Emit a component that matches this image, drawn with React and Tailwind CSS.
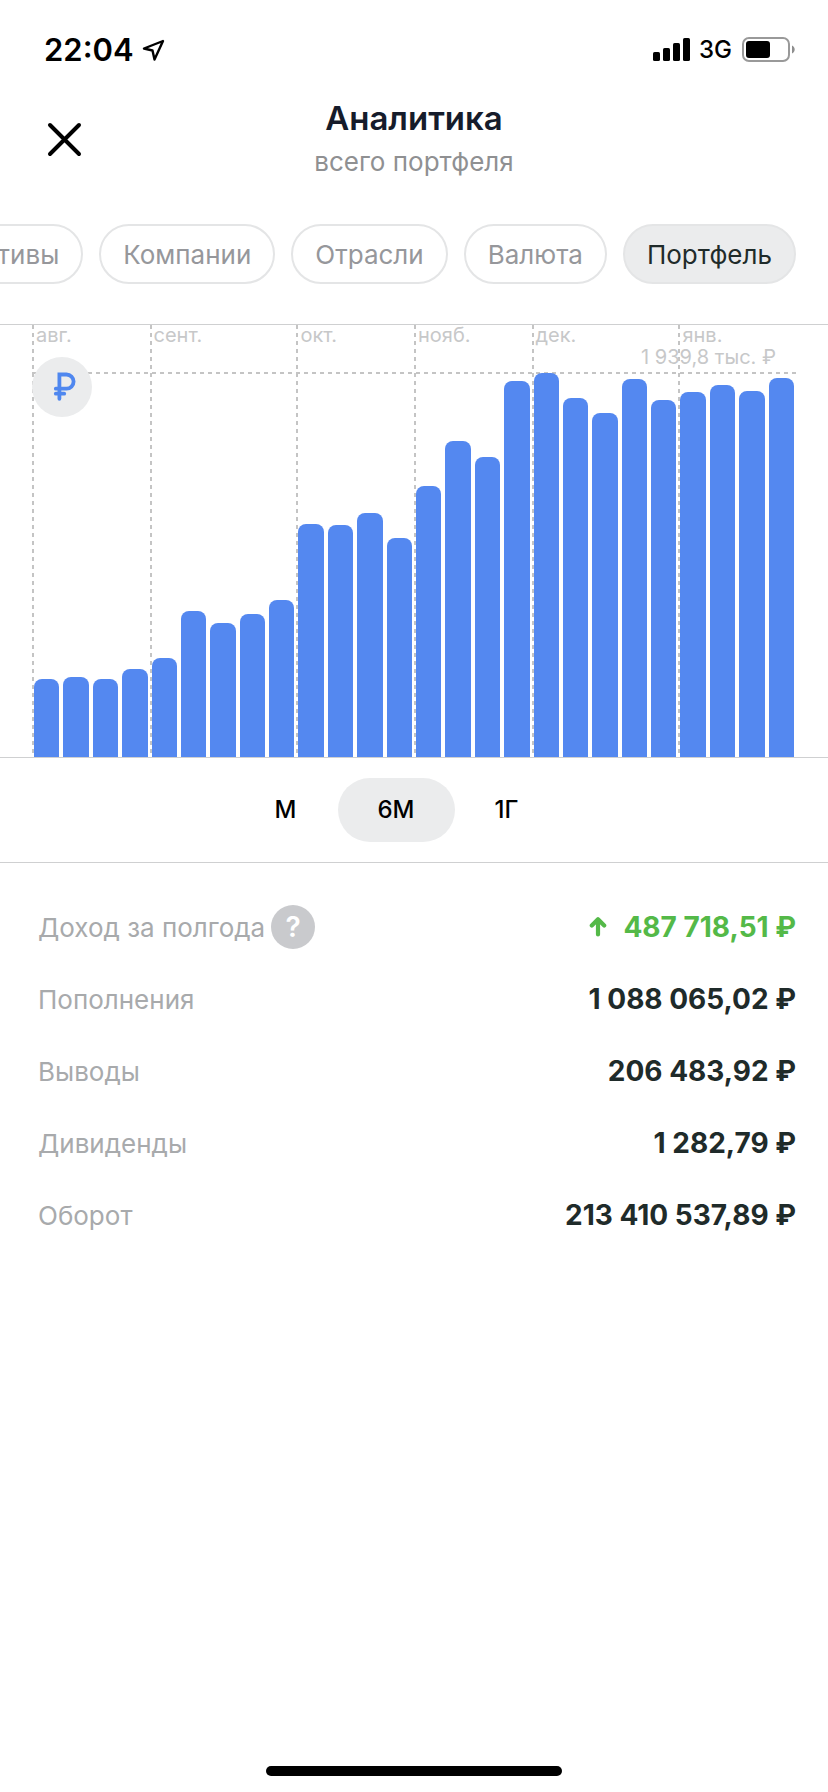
import { useState } from 'react';

const tabs = ['Активы', 'Компании', 'Отрасли', 'Валюта', 'Портфель'];

const periods = ['М', '6М', '1Г'];

// Weekly portfolio value, in pixels of bar height
const bars = [
  78, 80, 78, 88, 99, 146, 134, 143, 157, 233, 232, 244, 219, 271, 316, 300, 376, 384, 359, 344,
  378, 357, 365, 372, 366, 379
];

// Each month label starts at a given week and spans some weeks
const months = [
  { name: 'авг.', span: 'col-span-4' },
  { name: 'сент.', span: 'col-span-5' },
  { name: 'окт.', span: 'col-span-4' },
  { name: 'нояб.', span: 'col-span-4' },
  { name: 'дек.', span: 'col-span-5' },
  { name: 'янв.', span: 'col-span-4' }
];

const stats = [
  { label: 'Доход за полгода', value: '487 718,51 ₽', help: true, up: true },
  { label: 'Пополнения', value: '1 088 065,02 ₽' },
  { label: 'Выводы', value: '206 483,92 ₽' },
  { label: 'Дивиденды', value: '1 282,79 ₽' },
  { label: 'Оборот', value: '213 410 537,89 ₽' }
];

function StatusBar() {
  return (
    <div className="flex h-[100px] items-center justify-between pl-11 pr-8">
      <div className="flex items-center gap-2 text-[31px] font-semibold leading-10 text-black">
        <span>22:04</span>
        <svg width="24" height="24" viewBox="0 0 24 24" fill="none" stroke="currentColor" strokeWidth="2.4" strokeLinejoin="round">
          <path d="M21 3 L2 10.5 L10.5 12.5 L12.5 21.5 Z" />
        </svg>
      </div>
      <div className="flex items-center text-black">
        <svg width="38" height="24" viewBox="0 0 38 24" fill="currentColor">
          <rect x="0" y="14" width="7" height="9" rx="1.6" />
          <rect x="10" y="10" width="7" height="13" rx="1.6" />
          <rect x="20" y="5" width="7" height="18" rx="1.6" />
          <rect x="30" y="0" width="7" height="23" rx="1.6" />
        </svg>
        <span className="ml-2 text-2xl font-medium leading-8">3G</span>
        <svg className="ml-2.5" width="54" height="26" viewBox="0 0 54 26">
          <rect x="1" y="1" width="46" height="23" rx="6" fill="none" stroke="#999999" strokeWidth="2" />
          <rect x="4" y="4" width="24" height="17" rx="3" fill="#000000" />
          <path d="M50 8.5 C53.6 10 53.6 15 50 16.5 Z" fill="#8e8e8e" />
        </svg>
      </div>
    </div>
  );
}

function RubleIcon() {
  return (
    <svg width="28" height="32" viewBox="0 0 28 32" fill="none" stroke="#4f87ef" strokeWidth="3.8" strokeLinecap="round">
      <path d="M11.4 27.8 V3.5 H18.5 A7.1 7.1 0 0 1 18.5 17.7 H7.8" />
      <path d="M7.8 22.7 H16.2" />
    </svg>
  );
}

function Chart() {
  return (
    <div className="relative border-y border-[#cfd0d1] px-8">
      <div className="grid h-[432px] grid-cols-26">
        {months.map(month => (
          <div key={month.name} className={`relative ${month.span}`}>
            <svg className="absolute left-0 top-0 h-full w-[2px]" aria-hidden="true">
              <line x1="1" y1="0" x2="1" y2="100%" stroke="#c4c4c4" strokeWidth="2" strokeDasharray="4 4" />
            </svg>
            <span className="block pl-1 text-xl leading-5 text-[#c7c8c9]">{month.name}</span>
          </div>
        ))}
      </div>

      {/* Maximum value line */}
      <svg className="absolute left-8 right-8 top-[47px] h-[2px] w-[calc(100%-64px)]" aria-hidden="true">
        <line x1="0" y1="1" x2="100%" y2="1" stroke="#c4c4c4" strokeWidth="2" strokeDasharray="4 4" />
      </svg>
      <span className="absolute right-13 top-5 text-xl leading-6 text-[#c7c8c9]">1 939,8 тыс. ₽</span>

      <div className="absolute inset-x-8 bottom-0 grid grid-cols-26 items-end">
        {bars.map((height, i) => (
          <div key={i} className="mx-[2px] rounded-t-lg bg-[#5488f0]" style={{ height }} />
        ))}
      </div>

      <button
        type="button"
        aria-label="Рубли"
        className="absolute left-8 top-8 flex size-15 items-center justify-center rounded-full bg-[#ebeced]"
      >
        <RubleIcon />
      </button>
    </div>
  );
}

export default function App() {
  const [activeTab, setActiveTab] = useState('Портфель');
  const [period, setPeriod] = useState('6М');

  return (
    <div className="flex min-h-screen flex-col overflow-hidden bg-white font-['Inter',sans-serif]">
      <StatusBar />

      {/* Header */}
      <header className="relative flex h-[124px] flex-col items-center">
        <button type="button" aria-label="Закрыть" className="absolute left-11 top-5 flex size-10 items-center justify-center">
          <svg width="40" height="40" viewBox="0 0 40 40" stroke="#000000" strokeWidth="4" strokeLinecap="round">
            <path d="M6 5 L35 34 M35 5 L6 34" />
          </svg>
        </button>
        <h1 className="text-[33px] font-semibold leading-9 text-[#161c2b]">Аналитика</h1>
        <p className="mt-2 text-[26px] leading-9 text-[#8f9092]">всего портфеля</p>
      </header>

      {/* Tabs */}
      <nav className="flex justify-end gap-4 px-8 pb-10">
        {tabs.map(tab => (
          <button
            key={tab}
            type="button"
            onClick={() => setActiveTab(tab)}
            className={`h-15 shrink-0 rounded-full border-2 border-[#e4e5e6] px-[22px] text-[26px] ${
              tab === activeTab ? 'bg-[#ebeced] text-[#1f2b2a]' : 'bg-white text-[#96979b]'
            }`}
          >
            {tab}
          </button>
        ))}
      </nav>

      <Chart />

      {/* Period switch */}
      <div className="flex h-[105px] items-center justify-center border-b border-[#cfd0d1] pr-9">
        {periods.map(item => (
          <button
            key={item}
            type="button"
            onClick={() => setPeriod(item)}
            className={`h-16 rounded-full text-2xl font-medium text-black ${
              item === period ? 'w-[117px] bg-[#ebeced]' : 'w-[104px]'
            }`}
          >
            {item}
          </button>
        ))}
      </div>

      {/* Totals */}
      <dl className="pl-[38px] pr-8 pt-7">
        {stats.map(stat => (
          <div key={stat.label} className="flex h-[72px] items-center justify-between">
            <dt className="flex items-center gap-1.5 text-[26px] text-[#a8aaac]">
              {stat.label}
              {stat.help && (
                <button
                  type="button"
                  aria-label="Подробнее"
                  className="flex size-11 items-center justify-center rounded-full bg-[#c9cacd] text-[28px] font-semibold text-white"
                >
                  ?
                </button>
              )}
            </dt>
            <dd className={`flex items-center gap-4 text-[28px] font-bold ${stat.up ? 'text-[#54b948]' : 'text-[#1f2b2a]'}`}>
              {stat.up && (
                <svg width="18" height="22" viewBox="0 0 18 22" fill="none" stroke="currentColor" strokeWidth="4.2" strokeLinecap="round" strokeLinejoin="round">
                  <path d="M9 18.5 V4 M2.8 9.5 L9 3.2 L15.2 9.5" />
                </svg>
              )}
              {stat.value}
            </dd>
          </div>
        ))}
      </dl>

      {/* Home indicator */}
      <div className="mx-auto mb-4 mt-auto h-2.5 w-74 rounded-full bg-black" />
    </div>
  );
}
